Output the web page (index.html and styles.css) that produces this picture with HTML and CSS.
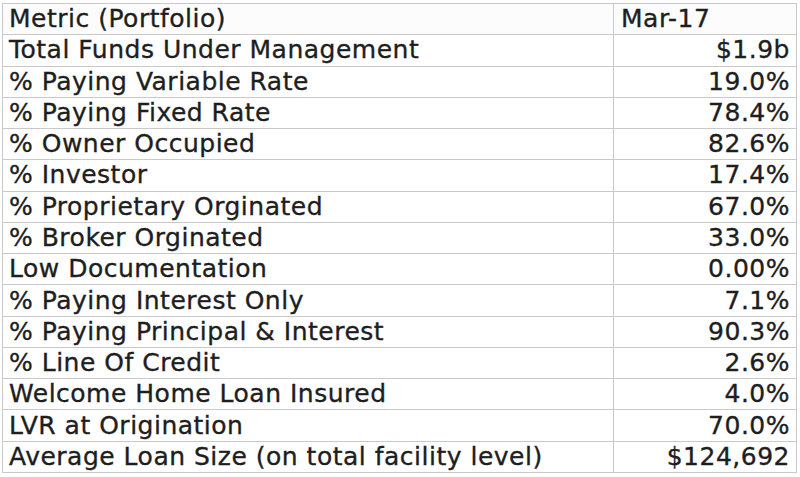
FILE: index.html
```html
<!DOCTYPE html>
<html>
<head>
<meta charset="utf-8">
<link rel="stylesheet" href="styles.css">
</head>
<body>
<table class="grid">
  <tr class="head"><td class="metric">Metric (Portfolio)</td><td class="date">Mar-17</td></tr>
  <tr><td class="metric">Total Funds Under Management</td><td class="val">$1.9b</td></tr>
  <tr><td class="metric">% Paying Variable Rate</td><td class="val">19.0%</td></tr>
  <tr><td class="metric">% Paying Fixed Rate</td><td class="val">78.4%</td></tr>
  <tr><td class="metric">% Owner Occupied</td><td class="val">82.6%</td></tr>
  <tr><td class="metric">% Investor</td><td class="val">17.4%</td></tr>
  <tr><td class="metric">% Proprietary Orginated</td><td class="val">67.0%</td></tr>
  <tr><td class="metric">% Broker Orginated</td><td class="val">33.0%</td></tr>
  <tr><td class="metric">Low Documentation</td><td class="val">0.00%</td></tr>
  <tr><td class="metric">% Paying Interest Only</td><td class="val">7.1%</td></tr>
  <tr><td class="metric">% Paying Principal &amp; Interest</td><td class="val">90.3%</td></tr>
  <tr><td class="metric">% Line Of Credit</td><td class="val">2.6%</td></tr>
  <tr><td class="metric">Welcome Home Loan Insured</td><td class="val">4.0%</td></tr>
  <tr><td class="metric">LVR at Origination</td><td class="val">70.0%</td></tr>
  <tr><td class="metric">Average Loan Size (on total facility level)</td><td class="val">$124,692</td></tr>
</table>
</body>
</html>
```
FILE: styles.css
```css
html, body {
  margin: 0;
  padding: 0;
  background: #ffffff;
}
body {
  padding: 3px 3px 0 2px;
  font-family: "DejaVu Sans", Verdana, sans-serif;
  color: #1e1e1e;
}
.grid {
  border-collapse: collapse;
  width: 795px;
  table-layout: fixed;
}
.grid td {
  border: 1px solid #c9c9c9;
  height: 30.27px;
  padding: 0;
  font-size: 25px;
  letter-spacing: 0.5px;
  line-height: 30px;
  white-space: nowrap;
  overflow: hidden;
  -webkit-text-stroke: 0.35px #1e1e1e;
}
.grid td.metric {
  width: 604px;
  padding-left: 6px;
}
.grid td.date {
  padding-left: 7px;
  text-align: left;
}
.grid td.val {
  text-align: right;
  padding-right: 6px;
}
.grid tr.head td {
  background: #fcfcfc;
}
```
